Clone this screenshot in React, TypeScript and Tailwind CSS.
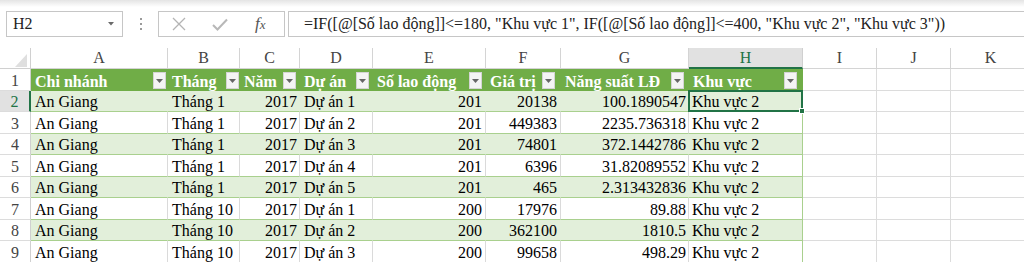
import React from "react";

type Col = { w: string; right: boolean; dp: string; btn: string };

const COLS: Col[] = [
  { w: "w-[137px]", right: false, dp: "pl-[4px]", btn: "mr-[2px]" },
  { w: "w-[72px]", right: false, dp: "pl-[4px]", btn: "mr-[1px]" },
  { w: "w-[60px]", right: true, dp: "pr-[2px]", btn: "mr-[4px]" },
  { w: "w-[73px]", right: false, dp: "pl-[4px]", btn: "mr-[4px]" },
  { w: "w-[113px]", right: true, dp: "pr-[3px]", btn: "mr-[4px]" },
  { w: "w-[75px]", right: true, dp: "pr-[3px]", btn: "mr-[6px]" },
  { w: "w-[128px]", right: true, dp: "pr-[2px]", btn: "mr-[5px]" },
  { w: "w-[114px]", right: false, dp: "pl-[3px]", btn: "mr-[6px]" },
];

const EMPTY = ["w-[74px]", "w-[74px]", "w-[80px]"];
const LETTERS = ["A", "B", "C", "D", "E", "F", "G", "H"];
const HEADERS = ["Chi nhánh", "Tháng", "Năm", "Dự án", "Số lao động", "Giá trị", "Năng suất LĐ", "Khu vực"];

const DATA: string[][] = [
  ["An Giang", "Tháng 1", "2017", "Dự án 1", "201", "20138", "100.1890547", "Khu vực 2"],
  ["An Giang", "Tháng 1", "2017", "Dự án 2", "201", "449383", "2235.736318", "Khu vực 2"],
  ["An Giang", "Tháng 1", "2017", "Dự án 3", "201", "74801", "372.1442786", "Khu vực 2"],
  ["An Giang", "Tháng 1", "2017", "Dự án 4", "201", "6396", "31.82089552", "Khu vực 2"],
  ["An Giang", "Tháng 1", "2017", "Dự án 5", "201", "465", "2.313432836", "Khu vực 2"],
  ["An Giang", "Tháng 10", "2017", "Dự án 1", "200", "17976", "89.88", "Khu vực 2"],
  ["An Giang", "Tháng 10", "2017", "Dự án 2", "200", "362100", "1810.5", "Khu vực 2"],
  ["An Giang", "Tháng 10", "2017", "Dự án 3", "200", "99658", "498.29", "Khu vực 2"],
];

const ROW_H = ["h-[21px]", "h-[22px]", "h-[21px]", "h-[22px]", "h-[21px]", "h-[22px]", "h-[21px]", "h-[22px]"];

function FilterButton({ mr }: { mr: string }) {
  return (
    <div
      className={`${mr} mb-[2px] flex h-[17px] w-[13px] shrink-0 items-center justify-center self-end border border-[#d4d4d4] bg-[#f4f4f4]`}
    >
      <svg width="7" height="4" viewBox="0 0 7 4">
        <path d="M0 0 L7 0 L3.5 4 Z" fill="#666666" />
      </svg>
    </div>
  );
}

function RowHead({ n, selected }: { n: number; selected?: boolean }) {
  return (
    <div
      className={`flex w-[31px] shrink-0 items-end justify-center border-b border-b-[#dcdcdc] leading-[18px] ${
        selected
          ? "border-r-2 border-r-[#217346] bg-[#e1e1e1] text-[#217346]"
          : "border-r border-r-[#d0d0d0] bg-white text-[#444444]"
      }`}
    >
      {n}
    </div>
  );
}

function EmptyCells() {
  return (
    <>
      {EMPTY.map((w, i) => (
        <div key={i} className={`${w} shrink-0 border-b border-r border-[#dcdcdc] bg-white`} />
      ))}
    </>
  );
}

export default function App() {
  return (
    <div className="h-[262px] w-[1024px] overflow-hidden bg-white font-['Liberation_Serif','Times_New_Roman',serif] text-[16px] text-black">
      {/* Formula bar */}
      <div className="flex h-[48px] items-start bg-[linear-gradient(to_bottom,#e4e4e4_0px,#ffffff_7px)] pl-[6px] pt-[11px]">
        <div className="flex h-[26px] w-[117px] shrink-0 items-center justify-between border border-[#c6c6c6] bg-white pl-[6px] pr-[8px] leading-[24px] text-[#222222]">
          <span>H2</span>
          <svg width="6" height="4" viewBox="0 0 6 4">
            <path d="M0 0 L6 0 L3 3.5 Z" fill="#6a6a6a" />
          </svg>
        </div>
        <div className="flex h-[26px] w-[35px] shrink-0 flex-col items-center justify-center gap-[3px]">
          <div className="h-[2px] w-[2px] bg-[#9a9a9a]" />
          <div className="h-[2px] w-[2px] bg-[#9a9a9a]" />
          <div className="h-[2px] w-[2px] bg-[#9a9a9a]" />
        </div>
        <div className="flex h-[26px] w-[127px] shrink-0 items-center border border-[#c6c6c6] bg-white">
          <svg className="ml-[13px]" width="14" height="14" viewBox="0 0 14 14">
            <path d="M1 1 L13 13 M13 1 L1 13" stroke="#b4b4b4" strokeWidth="1.3" fill="none" />
          </svg>
          <svg className="ml-[26px]" width="16" height="13" viewBox="0 0 16 13">
            <path d="M1 7 L5.5 11.5 L15 1.5" stroke="#b8b8b8" strokeWidth="2" fill="none" />
          </svg>
          <span className="ml-[27px] italic leading-[20px] text-[#555555]">
            <span className="text-[17px]">f</span>
            <span className="text-[13px]">x</span>
          </span>
        </div>
        <div className="ml-[3px] flex h-[26px] min-w-0 flex-1 items-center overflow-hidden whitespace-nowrap border border-r-0 border-[#c6c6c6] bg-white pl-[15px] leading-[24px] text-[#222222]">
          =IF([@[Số lao động]]&lt;=180, "Khu vực 1", IF([@[Số lao động]]&lt;=400, "Khu vực 2", "Khu vực 3"))
        </div>
      </div>

      {/* Column headers */}
      <div className="flex h-[21px]">
        <div className="relative w-[31px] shrink-0 border-b border-r border-[#d0d0d0] bg-white">
          <svg className="absolute left-0 top-0" width="31" height="21" viewBox="0 0 31 21">
            <path d="M27 6 L27 19 L15 19 Z" fill="#dfdfdf" />
          </svg>
        </div>
        {COLS.map((c, i) =>
          i === 7 ? (
            <div
              key={i}
              className={`${c.w} flex shrink-0 items-end justify-center border-b-2 border-r border-b-[#217346] border-r-[#d0d0d0] bg-[#e1e1e1] leading-[18px] text-[#217346]`}
            >
              {LETTERS[i]}
            </div>
          ) : (
            <div
              key={i}
              className={`${c.w} flex shrink-0 items-end justify-center border-b border-r border-[#d4d4d4] bg-white pb-[1px] leading-[18px] text-[#444444]`}
            >
              {LETTERS[i]}
            </div>
          )
        )}
        {["I", "J", "K"].map((l, i) => (
          <div
            key={l}
            className={`${EMPTY[i]} flex shrink-0 items-end justify-center border-b border-r border-[#d4d4d4] bg-white pb-[1px] leading-[18px] text-[#444444]`}
          >
            {l}
          </div>
        ))}
      </div>

      {/* Table header row */}
      <div className="flex h-[22px]">
        <RowHead n={1} />
        {COLS.map((c, i) => (
          <div
            key={i}
            className={`${c.w} flex shrink-0 items-end justify-between bg-[#70ad47] pl-[4px] font-bold leading-[18px] text-white`}
          >
            <span className="whitespace-nowrap">{HEADERS[i]}</span>
            <FilterButton mr={c.btn} />
          </div>
        ))}
        <EmptyCells />
      </div>

      {/* Data rows */}
      {DATA.map((row, r) => {
        const band = r % 2 === 0;
        return (
          <div key={r} className={`flex ${ROW_H[r]}`}>
            <RowHead n={r + 2} selected={r === 0} />
            {row.map((v, i) => {
              const c = COLS[i];
              const edge =
                i === 7
                  ? "border-r-[#a9d08e]"
                  : band
                  ? "border-r-[#e2efda]"
                  : "border-r-[#dadada]";
              return (
                <div
                  key={i}
                  className={`${c.w} ${c.dp} ${edge} ${
                    c.right ? "justify-end" : "justify-start"
                  } ${band ? "bg-[#e2efda]" : "bg-white"} relative flex shrink-0 items-end whitespace-nowrap border-b border-r border-b-[#a9d08e] leading-[18px]`}
                >
                  {v}
                  {r === 0 && i === 7 && (
                    <div className="absolute -bottom-[1px] -left-[1px] -right-[1px] -top-[1px] z-10 border-2 border-[#217346]">
                      <div className="absolute -bottom-[4px] -right-[4px] h-[6px] w-[6px] border border-white bg-[#217346]" />
                    </div>
                  )}
                </div>
              );
            })}
            <EmptyCells />
          </div>
        );
      })}
    </div>
  );
}
